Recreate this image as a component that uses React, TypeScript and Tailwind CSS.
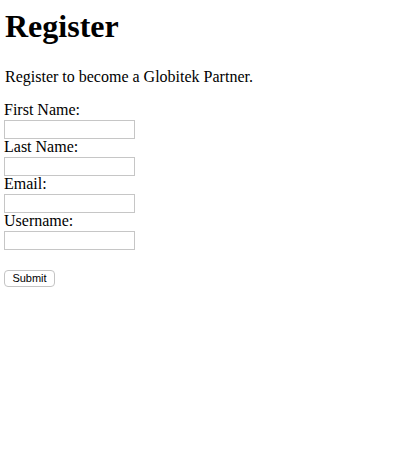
import { useState } from "react";

const FIELDS = [
  { id: "first_name", label: "First Name:" },
  { id: "last_name", label: "Last Name:" },
  { id: "email", label: "Email:" },
  { id: "username", label: "Username:" },
];

export default function App() {
  const [values, setValues] = useState<Record<string, string>>({});

  return (
    <div className="min-h-[475px] bg-white pl-1 pt-[8px] font-['Liberation_Serif',serif] text-black">
      <h1 className="text-[32px] font-bold leading-[37px] pl-px">Register</h1>

      <p className="mt-[23px] text-[16px] leading-[18px] pl-px">
        Register to become a Globitek Partner.
      </p>

      <form onSubmit={(e) => e.preventDefault()} className="mt-[14px] flex flex-col items-start">
        {FIELDS.map((f) => (
          <div key={f.id} className="flex flex-col items-start">
            <label htmlFor={f.id} className="h-[20px] text-[16px] leading-[20px]">
              {f.label}
            </label>
            <input
              id={f.id}
              type="text"
              value={values[f.id] ?? ""}
              onChange={(e) => setValues({ ...values, [f.id]: e.target.value })}
              className="-mb-[2px] h-[19px] w-[131px] border border-[#c6c6c6] bg-white px-[2px] text-[13px] outline-none"
            />
          </div>
        ))}

        <button
          type="submit"
          className="mt-[22px] h-[17px] w-[51px] rounded-[4px] border border-[#c4c4c4] bg-white font-['Liberation_Sans',Arial,sans-serif] text-[11px] leading-[15px] text-black"
        >
          Submit
        </button>
      </form>
    </div>
  );
}
